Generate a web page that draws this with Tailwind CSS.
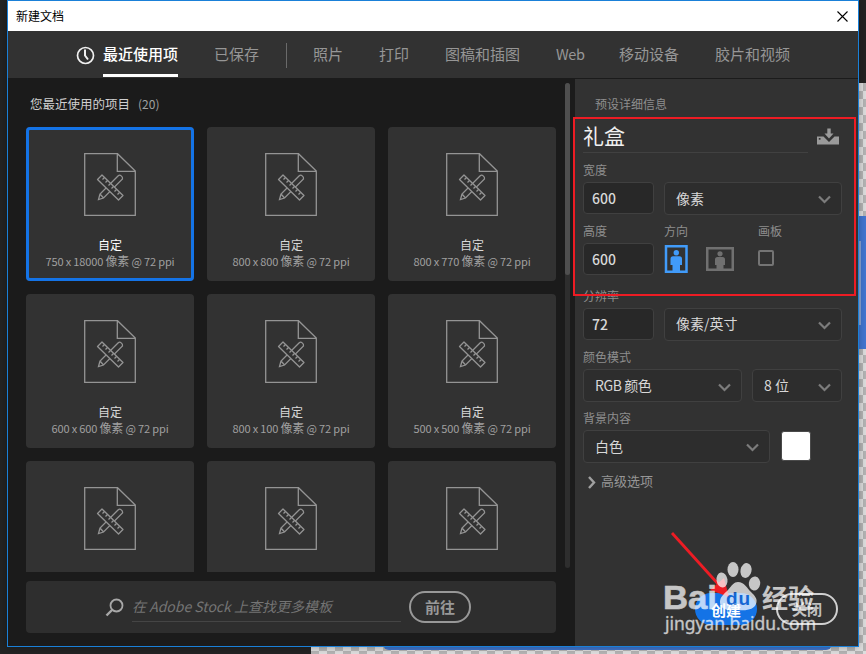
<!DOCTYPE html>
<html lang="zh-CN">
<head>
    <meta charset="UTF-8">
    <meta name="viewport" content="width=device-width, initial-scale=1.0">
    <title>新建文档</title>
    <script src="https://cdn.jsdelivr.net/npm/@tailwindcss/browser@4"></script>
</head>
<body class="relative w-[866px] h-[654px] overflow-hidden bg-[#232323] font-['Noto_Sans_CJK_SC',sans-serif]">
    <!-- Canvas behind the dialog -->
    <div class="absolute left-[311px] top-[83px] w-[555px] h-[571px] bg-[conic-gradient(#b4b4b4_25%,#dedede_0_50%,#b4b4b4_0_75%,#dedede_0)] bg-[length:16px_16px]"></div>
    <div class="absolute left-[383px] top-[600px] w-[449px] h-[50px] rounded-b-md bg-[#3f74cc]"></div>
    <div class="absolute left-[850px] top-[216px] w-[16px] h-[133px] bg-[#4276d2]"></div>
    <div class="absolute left-[850px] top-[241px] w-[11px] h-[84px] bg-[#8aa6d6]"></div>

    <!-- Dialog -->
    <div class="relative ml-[7px] w-[852px] h-[647px] flex flex-col border border-[#1a80d8] bg-[#1b1b1b] shadow-[0_0_8px_rgba(0,0,0,0.3)]">
        <!-- Title bar -->
        <div class="h-[30px] shrink-0 bg-white flex items-center justify-between pl-[8px] pr-[10px]">
            <span class="text-[12px] leading-none text-black">新建文档</span>
            <svg class="w-[11px] h-[11px]" viewBox="0 0 11 11" fill="none" stroke="#000" stroke-width="1.1"><path d="M.5 .5l10 10M10.500 .5l-10 10"/></svg>
        </div>

        <!-- Tabs -->
        <nav class="h-[47px] shrink-0 bg-[#323232] flex items-start text-[15px] leading-[45px] text-[#969696] whitespace-nowrap">
            <svg class="ml-[68px] mt-[15px] w-[19px] h-[19px]" viewBox="0 0 19 19" fill="none" stroke="#f0f0f0"><circle cx="9.500" cy="9.500" r="8" stroke-width="1.700"/><path d="M9 3.500V9.500L12 13.500" stroke-width="2"/></svg>
            <a class="ml-[8px] h-[46px] w-[75px] border-b-[3px] border-white text-white font-medium">最近使用项</a>
            <a class="ml-[36px] w-[45px]">已保存</a>
            <span class="ml-[27px] mt-[12px] w-px h-[25px] bg-[#6a6a6a]"></span>
            <a class="ml-[26px] w-[30px]">照片</a>
            <a class="ml-[36px] w-[30px]">打印</a>
            <a class="ml-[36px] w-[75px]">图稿和插图</a>
            <a class="ml-[36px] w-[28px] text-[14.500px] tracking-[-0.4px]">Web</a>
            <a class="ml-[35px] w-[60px]">移动设备</a>
            <a class="ml-[36px] w-[75px]">胶片和视频</a>
        </nav>

        <div class="flex flex-1 min-h-0">
            <!-- Recent presets -->
            <main class="w-[567px] shrink-0 flex flex-col">
                <div class="flex h-[494px]">
                    <div class="w-[557px] pl-[18px]">
                        <div class="h-[49px] pl-[4px] pt-[17px] flex items-start leading-[18px]">
                            <span class="text-[12.500px] text-[#cfcfcf] w-[100px]">您最近使用的项目</span>
                            <span class="ml-[8px] text-[12px] text-[#a0a0a0]">(20)</span>
                        </div>
                        <div id="presets" class="grid grid-cols-[168px_168px_168px] gap-[13px] h-[445px] overflow-hidden"></div>
                    </div>
                    <div class="mt-[5px] w-[5px] h-[485px] rounded-full bg-[#2e2e2e]">
                        <div class="h-[192px] rounded-full bg-[#4f4f4f]"></div>
                    </div>
                </div>

                <!-- Stock search -->
                <div class="ml-[18px] mt-[9px] w-[530px] h-[52px] rounded bg-[#2e2e2e] flex items-center pl-[79px]">
                    <svg class="w-[19px] h-[19px]" viewBox="0 0 19 19" fill="none" stroke="#a8a8a8" stroke-width="1.800"><circle cx="11.500" cy="7.500" r="6"/><path d="M7 12L1.500 17.500" stroke-width="2.400"/></svg>
                    <div class="ml-[8px] w-[269px] h-[30px] border-b border-[#454545] text-[14px] leading-[28px] italic text-[#747474] whitespace-nowrap">在 Adobe Stock 上查找更多模板</div>
                    <button class="ml-[8px] w-[62px] h-[32px] rounded-full border-2 border-[#989898] pb-[2px] text-[15px] leading-none font-bold text-[#989898]">前往</button>
                </div>
            </main>

            <!-- Preset details -->
            <aside class="mt-px flex-1 bg-[#323232] pl-[8px] text-[#8e8e8e] text-[12px] whitespace-nowrap">
                <div class="h-[39px] pt-[16px] pl-[12px] leading-[18px]">预设详细信息</div>
                <div class="flex h-[35px]">
                    <div class="w-[225px] border-b border-[#414141] text-[21px] leading-[34px] text-[#f0f0f0]">礼盒</div>
                    <svg class="ml-[9px] mt-[10px] w-[22px] h-[17px]" viewBox="0 0 22 17" fill="#9a9a9a"><path d="M0 8.500h6.500l5.500 5.500 5.500-5.500H22v8H0z"/><path d="M10.300 .5h3.400v5h2.800l-4.500 5-4.500-5h2.800z"/><path d="M1.800 10h1.700v1.700H1.800z" fill="#323232"/></svg>
                </div>
                <div class="h-[29px] pt-[8px] leading-[18px]">宽度</div>
                <div class="flex items-start gap-[10px] h-[33px] text-[14px] text-[#d8d8d8]">
                    <div class="w-[71px] h-[32px] rounded border border-[#404040] bg-[#282828] pl-[8px] leading-[30px] font-medium">600</div>
                    <div class="w-[178px] h-[33px] rounded border border-[#404040] bg-[#2d2d2d] pl-[11px] pr-[10px] pb-px flex items-center justify-between">像素<svg class="mt-[3px] w-[13px] h-[9px]" viewBox="0 0 13 9" fill="none" stroke="#7c7c7c" stroke-width="2.200"><path d="M1 1.500l5.500 5.500L12 1.500"/></svg></div>
                </div>
                <div class="flex h-[28px] pt-[7px] leading-[18px]">
                    <span class="w-[81px]">高度</span>
                    <span class="w-[94px]">方向</span>
                    <span>画板</span>
                </div>
                <div class="flex items-start h-[32px] text-[14px] text-[#d8d8d8]">
                    <div class="w-[71px] h-[32px] rounded border border-[#404040] bg-[#282828] pl-[8px] leading-[30px] font-medium">600</div>
                    <svg class="ml-[10px] mt-[2px] w-[24px] h-[28px]" viewBox="0 0 24 28" fill="#419bf9"><path d="M2 1.250h20.500v25.500H2z" fill="none" stroke="#419bf9" stroke-width="2.500"/><circle cx="12.300" cy="7.800" r="2.700"/><path d="M9 11.200h6.500q2.500 0 2.500 2.500V20h-2v6H8.500V20h-2v-6.300q0-2.500 2.500-2.500z"/></svg>
                    <svg class="ml-[18px] mt-[4px] w-[28px] h-[24px]" viewBox="0 0 28 24" fill="#707070"><path d="M1.250 1.250h25.500v21.500H1.250z" fill="none" stroke="#707070" stroke-width="2.500"/><circle cx="14" cy="6.800" r="2.600"/><path d="M11.500 10h5q2.500 0 2.500 2.500V18h-1.500v4.500h-7V18H9v-5.500q0-2.500 2.500-2.500z"/></svg>
                    <div class="ml-[24px] mt-[7px] size-[16px] border-2 border-[#747474] rounded-[2px]"></div>
                </div>
                <div class="h-[33px] pt-[12px] leading-[18px]">分辨率</div>
                <div class="flex items-start gap-[10px] h-[33px] text-[14px] text-[#d8d8d8]">
                    <div class="w-[71px] h-[32px] rounded border border-[#404040] bg-[#282828] pl-[8px] leading-[30px] font-medium">72</div>
                    <div class="w-[178px] h-[33px] rounded border border-[#404040] bg-[#2d2d2d] pl-[11px] pr-[10px] pb-[2px] flex items-center justify-between">像素/英寸<svg class="mt-[4px] w-[13px] h-[9px]" viewBox="0 0 13 9" fill="none" stroke="#7c7c7c" stroke-width="2.200"><path d="M1 1.500l5.500 5.500L12 1.500"/></svg></div>
                </div>
                <div class="h-[28px] pt-[7px] leading-[18px]">颜色模式</div>
                <div class="flex gap-[10px] h-[33px] text-[14px] text-[#d8d8d8]">
                    <div class="w-[159px] h-[33px] rounded border border-[#404040] bg-[#2d2d2d] pl-[11px] pr-[10px] flex items-center justify-between"><span class="tracking-[-0.4px]">RGB 颜色</span><svg class="mt-[3px] w-[13px] h-[9px]" viewBox="0 0 13 9" fill="none" stroke="#7c7c7c" stroke-width="2.200"><path d="M1 1.500l5.500 5.500L12 1.500"/></svg></div>
                    <div class="w-[90px] h-[33px] rounded border border-[#404040] bg-[#2d2d2d] pl-[11px] pr-[10px] flex items-center justify-between">8 位<svg class="mt-[3px] w-[13px] h-[9px]" viewBox="0 0 13 9" fill="none" stroke="#7c7c7c" stroke-width="2.200"><path d="M1 1.500l5.500 5.500L12 1.500"/></svg></div>
                </div>
                <div class="h-[28px] pt-[7px] leading-[18px]">背景内容</div>
                <div class="flex gap-[11px] h-[33px] text-[14px] text-[#d8d8d8]">
                    <div class="w-[187px] h-[33px] rounded border border-[#404040] bg-[#2d2d2d] pl-[11px] pr-[10px] pb-px flex items-center justify-between">白色<svg class="mt-[3px] w-[13px] h-[9px]" viewBox="0 0 13 9" fill="none" stroke="#7c7c7c" stroke-width="2.200"><path d="M1 1.500l5.500 5.500L12 1.500"/></svg></div>
                    <div class="mt-px w-[30px] h-[30px] rounded-[3px] border border-[#4a4a4a] bg-white"></div>
                </div>
                <div class="flex items-center h-[38px] pl-[5px] pb-[2px] text-[13px] text-[#969696]">
                    <svg class="mt-[3px] w-[8px] h-[13px]" viewBox="0 0 8 13" fill="none" stroke="#a0a0a0" stroke-width="2.400"><path d="M1 1l5 5.500L1 12"/></svg>
                    <span class="ml-[5px]">高级选项</span>
                </div>
                <div class="flex mt-[92px] ml-[112px] gap-[19px]">
                    <button class="w-[62px] h-[32px] rounded-full bg-[#1473e6] text-[15px] leading-none font-bold text-white">创建</button>
                    <button class="w-[62px] h-[32px] rounded-full border-2 border-[#d0d0d0] pb-px text-[15px] leading-none font-bold text-[#c0c0c0]">关闭</button>
                </div>
            </aside>
        </div>
    </div>

    <!-- Annotations -->
    <div class="absolute left-[573px] top-[117px] w-[283px] h-[179px] border-2 border-[#ed1c24]"></div>
    <svg class="absolute left-0 top-0 w-[866px] h-[654px]" viewBox="0 0 866 654">
        <path d="M672 533L719 585" stroke="#ed1c24" stroke-width="2.800"/>
        <path d="M729 597L710 590L724 578z" fill="#ed1c24"/>
    </svg>

    <!-- Watermark -->
    <svg class="absolute left-0 top-0 w-[866px] h-[654px]" viewBox="0 0 866 654" fill="#fff" opacity="0.72">
        <ellipse cx="722" cy="580" rx="5.500" ry="7.500" transform="rotate(-8 722 580)"/>
        <ellipse cx="733" cy="569.500" rx="5.500" ry="7.500"/>
        <ellipse cx="746" cy="570.500" rx="5.500" ry="7.500" transform="rotate(12 746 570.500)"/>
        <ellipse cx="754.500" cy="583.500" rx="5.700" ry="7" transform="rotate(8 754.500 583.500)"/>
        <path d="M738 582c6 0 9 6 13 10s7 7 5 12-8 7-18 6c-9 1-18 0-18-8 0-5 4-8 8-12 4-5 6-8 10-8z"/>
        <text x="663" y="609" font-family="Liberation Sans" font-weight="bold" font-size="34" textLength="54" lengthAdjust="spacingAndGlyphs" stroke="#fff" stroke-width=".6">Bai</text>
        <text x="726" y="605" font-family="Liberation Sans" font-weight="bold" font-size="19" textLength="24" fill="#1562cc">du</text>
        <text x="762" y="608" font-family="Noto Sans CJK SC" font-weight="bold" font-size="26" textLength="52">经验</text>
        <text x="665" y="630" font-family="Noto Sans" font-size="17.500" textLength="151" stroke="#fff" stroke-width=".3">jingyan.baidu.com</text>
    </svg>

    <script>
        const presets = ['750 x 18000', '800 x 800', '800 x 770', '600 x 600', '800 x 100', '500 x 500', '750 x 1000', '800 x 600', '600 x 800'];
        document.getElementById('presets').innerHTML = presets.map((size, i) => `
            <div class="h-[154px] rounded bg-[#323232] pt-[26px] text-center ${i === 0 ? 'outline-3 -outline-offset-3 outline-[#1473e6]' : ''}">
                <svg class="mx-auto w-[52px] h-[63px]" viewBox="0 0 52 63" fill="none" stroke="#949494" stroke-width="1.300">
                    <path d="M.7 .7H33.500L51.300 18V62.300H.7zM33.300 .7V18.300H51.300"/>
                    <path d="M16 41L14.500 46.500L19.500 45L38.500 26Q39 24 36.800 22.500Q35.500 21.500 34 23zM16 41L19.500 45"/>
                    <path d="M18 22L13.500 26.500L34.500 47L39 42.500z" fill="#323232" stroke-linejoin="round"/>
                    <path d="M20.500 24.500l-2 2M23.500 27.500l-2 2M26.500 30.500l-2 2M29.500 33.500l-2 2M32.500 36.500l-2 2M35.500 39.500l-2 2"/>
                </svg>
                ${i < 6 ? `<div class="mt-[20px] h-[17px] text-[12px] leading-[17px] ${i === 0 ? 'text-white' : 'text-[#d8d8d8]'}">自定</div>
                <div class="text-[11px] leading-[17px] tracking-[-0.15px] text-[#a0a0a0] whitespace-nowrap">${size} <span class="text-[12px] leading-none">像素</span> @ 72 ppi</div>` : ''}
            </div>`).join('');
    </script>
</body>
</html>
